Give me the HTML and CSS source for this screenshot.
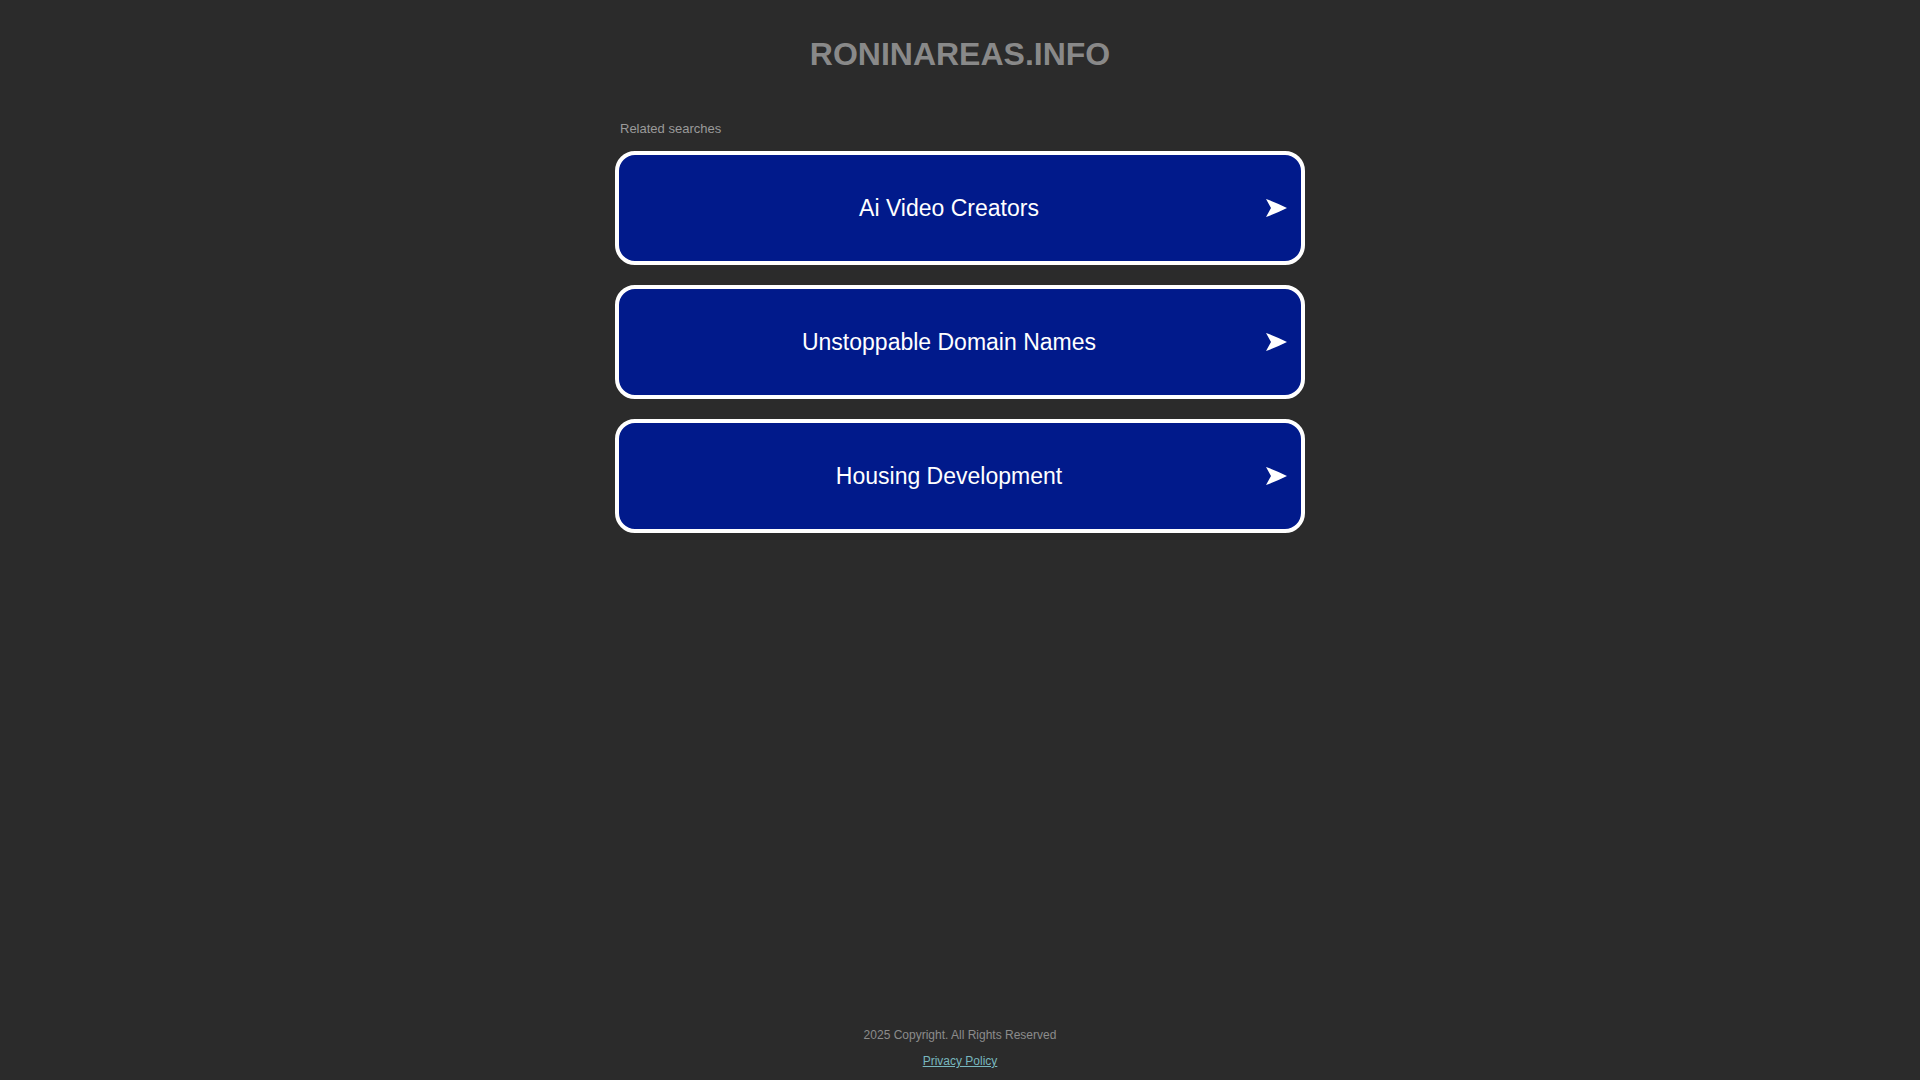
FILE: index.html
```html
<!DOCTYPE html>
<html lang="en">
<head>
<meta charset="utf-8">
<title>roninareas.info</title>
<link rel="stylesheet" href="styles.css">
</head>
<body>
<div class="page">
  <header class="header">
    <h1 class="domain">RONINAREAS.INFO</h1>
  </header>
  <main class="content">
    <div class="related">Related searches</div>
    <div class="links">
      <a class="link" href="#">
        <span class="label">Ai Video Creators</span>
        <svg class="arrow" viewBox="0 0 21 18" width="21" height="18"><path d="M0 0 Q10 3.5 21 9 Q10 14.5 0 18 L5 9 Z" fill="#fff"/></svg>
      </a>
      <a class="link" href="#">
        <span class="label">Unstoppable Domain Names</span>
        <svg class="arrow" viewBox="0 0 21 18" width="21" height="18"><path d="M0 0 Q10 3.5 21 9 Q10 14.5 0 18 L5 9 Z" fill="#fff"/></svg>
      </a>
      <a class="link" href="#">
        <span class="label">Housing Development</span>
        <svg class="arrow" viewBox="0 0 21 18" width="21" height="18"><path d="M0 0 Q10 3.5 21 9 Q10 14.5 0 18 L5 9 Z" fill="#fff"/></svg>
      </a>
    </div>
  </main>
  <footer class="footer">
    <div class="copyright">2025 Copyright. All Rights Reserved</div>
    <a class="privacy" href="#">Privacy Policy</a>
  </footer>
</div>
</body>
</html>
```
FILE: styles.css
```css
html, body {
  margin: 0;
  padding: 0;
  background: #2b2b2b;
  font-family: "Liberation Sans", Arial, sans-serif;
}

.page {
  min-height: 100vh;
  display: flex;
  flex-direction: column;
  box-sizing: border-box;
}

.header {
  padding-top: 34px;
  text-align: center;
}

.domain {
  margin: 0;
  font-size: 32px;
  line-height: 40px;
  font-weight: bold;
  color: #898989;
}

.content {
  width: 690px;
  margin: 47px auto 0;
  flex: 1;
}

.related {
  font-size: 13px;
  line-height: 15px;
  color: #9a9a9a;
  padding-left: 5px;
  margin-bottom: 15px;
}

.links {
  display: flex;
  flex-direction: column;
  gap: 20px;
}

.link {
  display: flex;
  align-items: center;
  height: 114px;
  box-sizing: border-box;
  border: 4px solid #ffffff;
  border-radius: 20px;
  background: #011a8b;
  color: #ffffff;
  text-decoration: none;
  padding: 0 14px 0 13px;
}

.label {
  flex: 1;
  text-align: center;
  font-size: 23px;
  line-height: 28px;
}

.arrow {
  display: block;
  flex: none;
}

.footer {
  display: flex;
  flex-direction: column;
  align-items: center;
  gap: 12px;
  padding-bottom: 12px;
  font-size: 12px;
  line-height: 14px;
}

.copyright {
  color: #8c8c8c;
}

.privacy {
  color: #78b7bf;
  text-decoration: underline;
}
```
